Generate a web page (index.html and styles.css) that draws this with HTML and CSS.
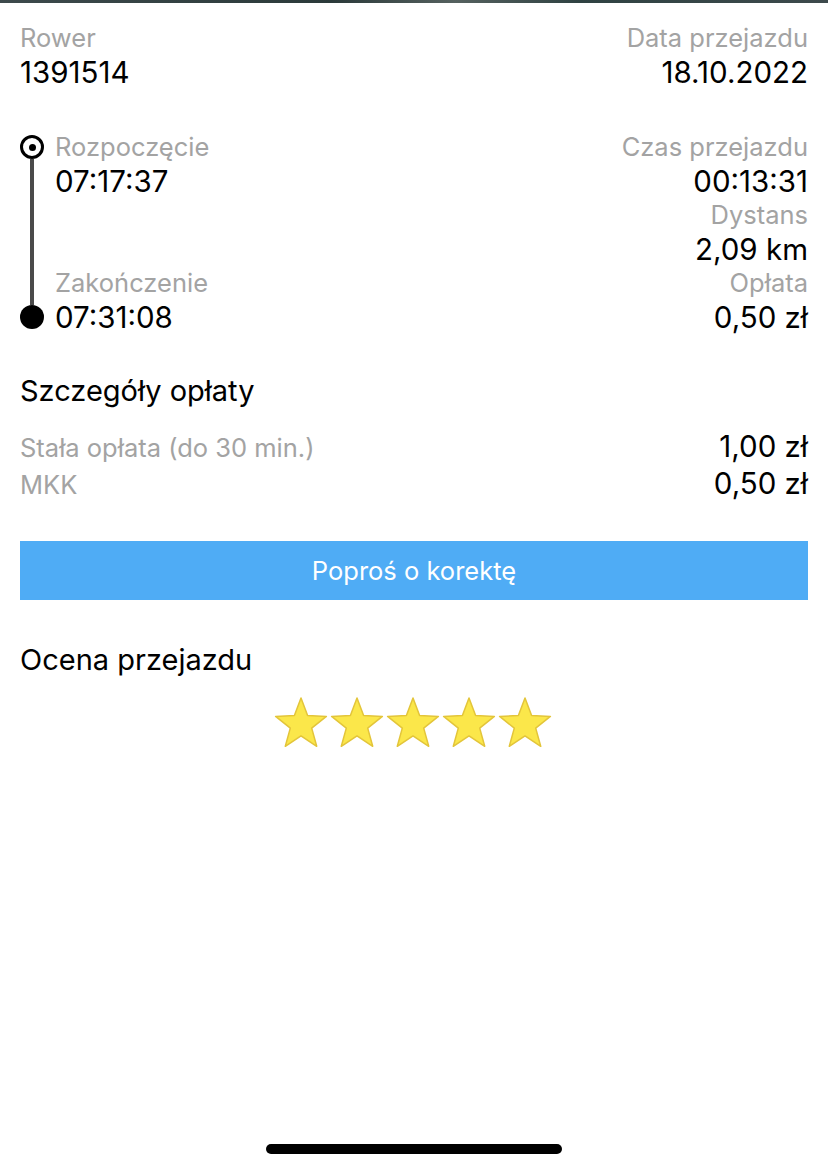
FILE: index.html
```html
<!DOCTYPE html>
<html lang="pl">
<head>
<meta charset="utf-8">
<link rel="stylesheet" href="styles.css">
</head>
<body>
<div class="topbar"></div>
<main class="page">
  <section class="pair-row">
    <div class="col">
      <div class="label">Rower</div>
      <div class="value">1391514</div>
    </div>
    <div class="col right">
      <div class="label">Data przejazdu</div>
      <div class="value">18.10.2022</div>
    </div>
  </section>

  <section class="ride">
    <div class="timeline">
      <div class="track">
        <span class="ring"></span>
        <span class="line"></span>
        <span class="dot"></span>
      </div>
      <div class="times">
        <div class="label">Rozpoczęcie</div>
        <div class="value">07:17:37</div>
        <div class="spacer"></div>
        <div class="label">Zakończenie</div>
        <div class="value">07:31:08</div>
      </div>
    </div>
    <div class="col right">
      <div class="label">Czas przejazdu</div>
      <div class="value">00:13:31</div>
      <div class="label">Dystans</div>
      <div class="value">2,09 km</div>
      <div class="label">Opłata</div>
      <div class="value">0,50 zł</div>
    </div>
  </section>

  <h2 class="heading">Szczegóły opłaty</h2>
  <section class="fees">
    <div class="fee">
      <span class="label">Stała opłata (do 30 min.)</span>
      <span class="value">1,00 zł</span>
    </div>
    <div class="fee">
      <span class="label">MKK</span>
      <span class="value">0,50 zł</span>
    </div>
  </section>

  <button class="action">Poproś o korektę</button>

  <h2 class="heading rating-title">Ocena przejazdu</h2>
  <div class="stars">
    <svg class="star" viewBox="0 0 56 54"><path d="M28 2 L34.6 19.6 L53.4 20.4 L38.7 32.1 L43.7 50.3 L28 39.9 L12.3 50.3 L17.3 32.1 L2.6 20.4 L21.4 19.6 Z"/></svg>
    <svg class="star" viewBox="0 0 56 54"><path d="M28 2 L34.6 19.6 L53.4 20.4 L38.7 32.1 L43.7 50.3 L28 39.9 L12.3 50.3 L17.3 32.1 L2.6 20.4 L21.4 19.6 Z"/></svg>
    <svg class="star" viewBox="0 0 56 54"><path d="M28 2 L34.6 19.6 L53.4 20.4 L38.7 32.1 L43.7 50.3 L28 39.9 L12.3 50.3 L17.3 32.1 L2.6 20.4 L21.4 19.6 Z"/></svg>
    <svg class="star" viewBox="0 0 56 54"><path d="M28 2 L34.6 19.6 L53.4 20.4 L38.7 32.1 L43.7 50.3 L28 39.9 L12.3 50.3 L17.3 32.1 L2.6 20.4 L21.4 19.6 Z"/></svg>
    <svg class="star" viewBox="0 0 56 54"><path d="M28 2 L34.6 19.6 L53.4 20.4 L38.7 32.1 L43.7 50.3 L28 39.9 L12.3 50.3 L17.3 32.1 L2.6 20.4 L21.4 19.6 Z"/></svg>
  </div>
</main>
<div class="home-bar"><span class="home-indicator"></span></div>
</body>
</html>
```

FILE: styles.css
```css
* { box-sizing: border-box; }
html, body {
  margin: 0;
  padding: 0;
  background: #ffffff;
}
body {
  width: 828px;
  height: 1170px;
  font-family: Inter, "Liberation Sans", Arial, sans-serif;
  color: #000;
  display: flex;
  flex-direction: column;
  overflow: hidden;
}
.topbar {
  height: 3px;
  background: linear-gradient(90deg, #3d4a4c, #2b3a3a 40%, #55615f 55%, #2f4242 70%, #3d4a4c);
  flex: none;
}
.page {
  flex: 1;
  padding: 18px 20px 0 20px;
  display: flex;
  flex-direction: column;
}
.label {
  font-size: 25.5px;
  line-height: 34px;
  color: #a3a3a3;
}
.value {
  font-size: 29.5px;
  line-height: 34px;
  color: #000;
}
.pair-row {
  display: flex;
  justify-content: space-between;
}
.col { display: flex; flex-direction: column; }
.col.right { align-items: flex-end; text-align: right; }

.ride {
  display: flex;
  justify-content: space-between;
  margin-top: 41px;
}
.timeline {
  display: flex;
  gap: 11px;
}
.track {
  width: 24px;
  display: flex;
  flex-direction: column;
  align-items: center;
  padding-top: 5px;
  padding-bottom: 5px;
}
.ring {
  width: 24px;
  height: 24px;
  border: 3.5px solid #000;
  border-radius: 50%;
  display: flex;
  align-items: center;
  justify-content: center;
  flex: none;
}
.ring::after {
  content: "";
  width: 7px;
  height: 7px;
  border-radius: 50%;
  background: #000;
}
.line {
  width: 4px;
  flex: 1;
  background: #4a4a4a;
}
.dot {
  width: 24px;
  height: 24px;
  border-radius: 50%;
  background: #000;
  flex: none;
}
.times {
  display: flex;
  flex-direction: column;
}
.spacer { height: 68px; }

.heading {
  font-size: 29px;
  line-height: 34px;
  font-weight: 400;
  margin: 0;
  margin-top: 40px;
}
.fees {
  margin-top: 20px;
  display: flex;
  flex-direction: column;
}
.fee {
  display: flex;
  justify-content: space-between;
  align-items: baseline;
  height: 37px;
}
.fee .label { line-height: 37px; }
.fee .value { line-height: 37px; }
.action {
  margin-top: 39px;
  height: 59px;
  width: 100%;
  border: none;
  border-radius: 0;
  background: #4facf5;
  color: #fff;
  font-family: inherit;
  font-size: 25.5px;
  padding: 0;
}
.rating-title { margin-top: 43px; }
.stars {
  display: flex;
  justify-content: center;
  gap: 0;
  margin-top: 19px;
  padding-right: 2px;
}
.star {
  width: 56px;
  height: 54px;
}
.star path {
  fill: #fbe74a;
  stroke: #e3c53a;
  stroke-width: 1.5;
  stroke-linejoin: round;
}
.home-bar {
  height: 26px;
  display: flex;
  justify-content: center;
  align-items: flex-start;
  flex: none;
}
.home-indicator {
  width: 296px;
  height: 10px;
  border-radius: 5px;
  background: #000;
}
```
